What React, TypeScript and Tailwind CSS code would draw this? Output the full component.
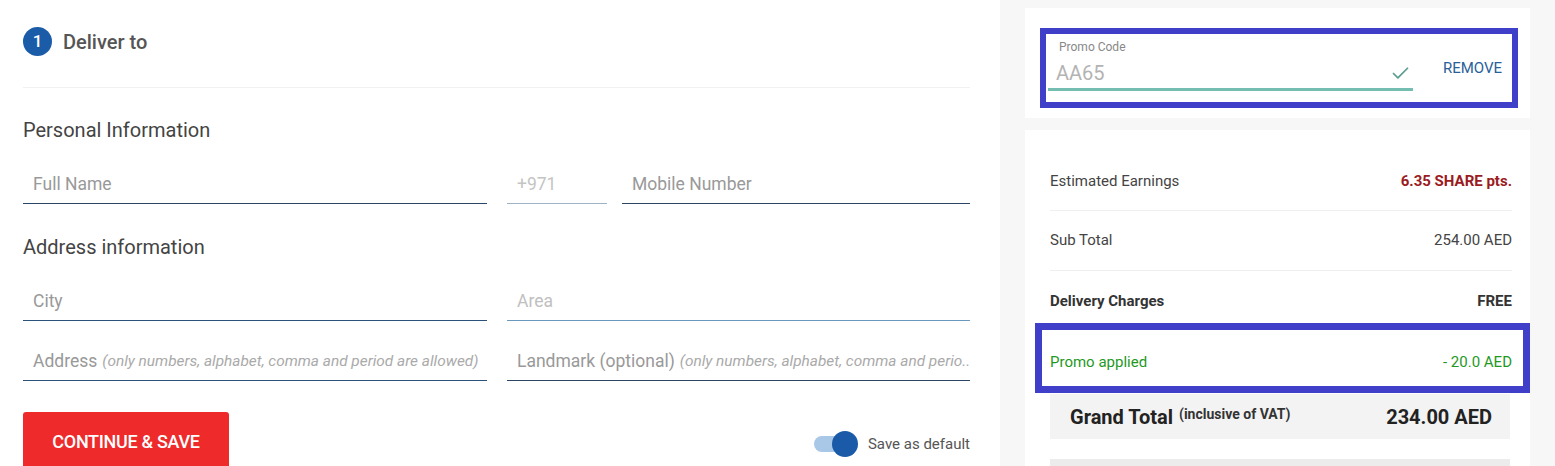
import { Check } from "lucide-react";

function Field({
  width,
  line,
  children,
}: {
  width: string;
  line: string;
  children: React.ReactNode;
}) {
  return (
    <div className={`${width} h-[40px] flex items-center pl-[10px] pt-[2px] border-b ${line} overflow-hidden whitespace-nowrap`}>
      {children}
    </div>
  );
}

function Row({
  label,
  value,
  labelClass = "text-[#444]",
  valueClass = "text-[#444]",
  divider = true,
  className = "h-[60px]",
}: {
  label: string;
  value: string;
  labelClass?: string;
  valueClass?: string;
  divider?: boolean;
  className?: string;
}) {
  return (
    <div className={`flex items-center justify-between ${className} ${divider ? "border-b border-[#efefef]" : ""}`}>
      <span className={`text-[15px] ${labelClass}`}>{label}</span>
      <span className={`text-[15px] ${valueClass}`}>{value}</span>
    </div>
  );
}

export default function App() {
  return (
    <div className="flex w-[1555px] h-[466px] overflow-hidden bg-white font-['Roboto',sans-serif]">
      {/* left: delivery form */}
      <div className="w-[1000px] pl-[23px] pr-[30px] pt-[27px]">
        <div className="flex items-center h-[29px] gap-[11px]">
          <div className="w-[29px] h-[29px] rounded-full bg-[#1a5ca8] text-white text-[17px] font-medium flex items-center justify-center">
            1
          </div>
          <span className="text-[20px] font-medium text-[#555]">Deliver to</span>
        </div>
        <div className="mt-[31px] h-px bg-[#f1f1f1]" />

        <h2 className="mt-[30px] text-[20px] leading-[24px] text-[#444]">Personal Information</h2>
        <div className="mt-[22px] flex gap-[20px]">
          <Field width="w-[464px]" line="border-[#2b4663]">
            <span className="text-[17.5px] text-[#999]">Full Name</span>
          </Field>
          <div className="flex gap-[15px]">
            <Field width="w-[100px]" line="border-[#9db4c8]">
              <span className="text-[17.5px] text-[#c4c4c4]">+971</span>
            </Field>
            <Field width="w-[348px]" line="border-[#2b4663]">
              <span className="text-[17.5px] text-[#999]">Mobile Number</span>
            </Field>
          </div>
        </div>

        <h2 className="mt-[31px] text-[20px] leading-[24px] text-[#444]">Address information</h2>
        <div className="mt-[22px] flex gap-[20px]">
          <Field width="w-[464px]" line="border-[#2b5278]">
            <span className="text-[17.5px] text-[#999]">City</span>
          </Field>
          <Field width="w-[463px]" line="border-[#6b98bd]">
            <span className="text-[17.5px] text-[#c0c0c0]">Area</span>
          </Field>
        </div>
        <div className="mt-[20px] flex gap-[20px]">
          <Field width="w-[464px]" line="border-[#2b5278]">
            <span className="text-[17.5px] text-[#999]">Address</span>
            <span className="ml-[5px] text-[15.4px] italic text-[#aaa]">
              (only numbers, alphabet, comma and period are allowed)
            </span>
          </Field>
          <Field width="w-[463px]" line="border-[#2b4663]">
            <span className="text-[17.5px] text-[#999]">Landmark (optional)</span>
            <span className="ml-[5px] text-[15.4px] italic text-[#aaa]">(only numbers, alphabet, comma and perio..</span>
          </Field>
        </div>

        <div className="mt-[31px] flex items-start justify-between">
          <button className="w-[206px] h-[60px] rounded-[3px] bg-[#ee2a2b] text-white text-[18px] font-medium pb-[2px] tracking-[-0.3px]">
            CONTINUE &amp; SAVE
          </button>
          <div className="flex items-center gap-[10px] mt-[19px]">
            <div className="relative w-[44px] h-[26px] flex items-center">
              <div className="w-[36px] h-[16px] rounded-full bg-[#a9c7e6]" />
              <div className="absolute right-0 w-[26px] h-[26px] rounded-full bg-[#1a5aa8]" />
            </div>
            <span className="text-[15px] text-[#555]">Save as default</span>
          </div>
        </div>
      </div>

      {/* right: summary */}
      <div className="flex-1 bg-[#f7f7f7] px-[25px] pt-[8px]">
        <div className="bg-white h-[110px] pl-[15px] pr-[12px] pt-[20px]">
          <div className="border-[6px] border-[#3f3fca] h-[80px] flex items-start">
            <div className="flex-1">
              <div className="pl-[13px] pt-[6px] text-[12px] text-[#888] leading-[14px]">Promo Code</div>
              <div className="ml-[2px] flex items-center justify-between border-b-[3px] border-[#73bdb1] w-[365px] h-[37px] pl-[8px] pr-[2px] pt-[4px]">
                <span className="text-[20px] text-[#b3b3b3]">AA65</span>
                <Check size={21} strokeWidth={2} className="text-[#5c9d90]" />
              </div>
            </div>
            <span className="mt-[23px] mr-[10px] text-[15px] text-[#2a5f99]">REMOVE</span>
          </div>
        </div>

        <div className="mt-[12px] bg-white h-[340px] pt-[23px]">
          <div className="pl-[25px] pr-[18px]">
            <Row
              label="Estimated Earnings"
              value="6.35 SHARE pts."
              valueClass="text-[#9b1b22] font-bold"
              className="h-[58px]"
            />
            <Row label="Sub Total" value="254.00 AED" />
            <Row
              label="Delivery Charges"
              value="FREE"
              labelClass="text-[#333] font-bold"
              valueClass="text-[#333] font-bold"
              divider={false}
              className="h-[52px] pt-[8px]"
            />
          </div>
          <div className="pl-[10px]">
            <div className="border-[7px] border-[#3f3fca] h-[70px] pl-[8px] pr-[11px] flex items-center justify-between pt-[8px]">
              <span className="text-[15px] text-[#1f991f]">Promo applied</span>
              <span className="text-[15px] text-[#1f991f]">- 20.0 AED</span>
            </div>
          </div>
          <div className="ml-[25px] mr-[20px] mt-px h-[45px] bg-[#f3f3f3] pl-[20px] pr-[18px] flex items-center justify-between">
            <div className="flex items-center gap-[6px]">
              <span className="text-[20px] font-bold text-[#222]">Grand Total</span>
              <span className="text-[14px] font-bold text-[#333] mb-[4px]">(inclusive of VAT)</span>
            </div>
            <span className="text-[20px] font-bold text-[#222]">234.00 AED</span>
          </div>
          <div className="ml-[25px] mr-[20px] mt-[20px] h-[40px] bg-[#ececec]" />
        </div>
      </div>
    </div>
  );
}
